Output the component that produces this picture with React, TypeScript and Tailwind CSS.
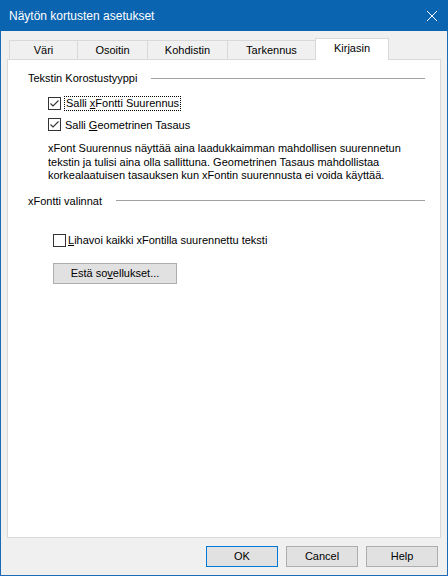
import React from "react";

const font = { fontFamily: '"Liberation Sans", Arial, sans-serif' };

function Check({ checked }: { checked: boolean }) {
    return (
        <span className="w-[13px] h-[13px] border border-[#333333] bg-white flex items-center justify-center shrink-0">
            {checked && (
                <svg width="11" height="11" viewBox="0 0 11 11">
                    <path d="M1.5 5.5 L4 8 L9.5 2.5" fill="none" stroke="#333333" strokeWidth="1.1" />
                </svg>
            )}
        </span>
    );
}

function GroupTitle({ label }: { label: string }) {
    return (
        <div className="flex items-center gap-[14px] pl-[20px] pr-[15px] text-[11px] text-black">
            <span>{label}</span>
            <div className="flex-1 h-px bg-[#a0a0a0]" />
        </div>
    );
}

const tabs = ["Väri", "Osoitin", "Kohdistin", "Tarkennus", "Kirjasin"];
const tabWidths = ["w-[68px]", "w-[70px]", "w-[80px]", "w-[88px]", "w-[74px]"];

export default function App() {
    return (
        <div style={font} className="w-[448px] h-[576px] flex flex-col border-x border-b border-[#1a6bb5] bg-[#f0f0f0] select-none">
            {/* Title bar */}
            <div className="h-[31px] bg-[#0a64b0] -mx-px flex items-center justify-between pl-[9px] pr-[10px] text-white text-[12px]">
                <span>Näytön kortusten asetukset</span>
                <svg width="12" height="12" viewBox="0 0 12 12">
                    <path d="M1 1 L11 11 M11 1 L1 11" stroke="#ffffff" strokeWidth="1" />
                </svg>
            </div>

            <div className="flex-1 flex flex-col px-[6px] pt-[7px]">
                {/* Tabs */}
                <div className="flex items-end pl-[2px] h-[21px] text-[11px] text-black">
                    {tabs.map((t, i) =>
                        i === 4 ? (
                            <div key={t} className={`${tabWidths[i]} h-[22px] -mb-px relative bg-white border-x border-t border-[#d9d9d9] flex items-center justify-center pb-[2px]`}>
                                {t}
                            </div>
                        ) : (
                            <div key={t} className={`${tabWidths[i]} h-[19px] bg-[#f0f0f0] border-t border-l border-[#d9d9d9] flex items-center justify-center`}>
                                {t}
                            </div>
                        )
                    )}
                </div>

                {/* Panel */}
                <div className="h-[479px] bg-white border border-[#d9d9d9] flex flex-col pt-[10px] text-[11px] text-black">
                    <GroupTitle label="Tekstin Korostustyyppi" />

                    <div className="flex items-center gap-[3px] pl-[40px] mt-[9px]">
                        <Check checked />
                        <span className="border border-dotted border-black px-px leading-[13px]">
                            Salli <span className="underline">x</span>Fontti Suurennus
                        </span>
                    </div>
                    <div className="flex items-center gap-[4px] pl-[40px] mt-[6px]">
                        <Check checked />
                        <span>
                            Salli <span className="underline">G</span>eometrinen Tasaus
                        </span>
                    </div>

                    <p className="pl-[40px] mt-[9px] leading-[13.5px] whitespace-nowrap">
                        xFont Suurennus näyttää aina laadukkaimman mahdollisen suurennetun
                        <br />
                        tekstin ja tulisi aina olla sallittuna. Geometrinen Tasaus mahdollistaa
                        <br />
                        korkealaatuisen tasauksen kun xFontin suurennusta ei voida käyttää.
                    </p>

                    <div className="mt-[10px]">
                        <GroupTitle label="xFontti valinnat" />
                    </div>

                    <div className="flex items-center gap-[2px] pl-[45px] mt-[23px]">
                        <Check checked={false} />
                        <span>
                            <span className="underline">L</span>ihavoi kaikki xFontilla suurennettu teksti
                        </span>
                    </div>

                    <div className="pl-[45px] mt-[14px]">
                        <div className="w-[124px] h-[21px] bg-[#e1e1e1] border border-[#adadad] flex items-center justify-center">
                            Estä so<span className="underline">v</span>ellukset...
                        </div>
                    </div>
                </div>

                {/* Buttons */}
                <div className="flex justify-end gap-[8px] pr-[3px] mt-[8px] text-[11px] text-black">
                    <div className="w-[72px] h-[21px] bg-[#e1e1e1] border border-[#0078d7] flex items-center justify-center">OK</div>
                    <div className="w-[72px] h-[21px] bg-[#e1e1e1] border border-[#adadad] flex items-center justify-center">Cancel</div>
                    <div className="w-[72px] h-[21px] bg-[#e1e1e1] border border-[#adadad] flex items-center justify-center">Help</div>
                </div>
            </div>
        </div>
    );
}
